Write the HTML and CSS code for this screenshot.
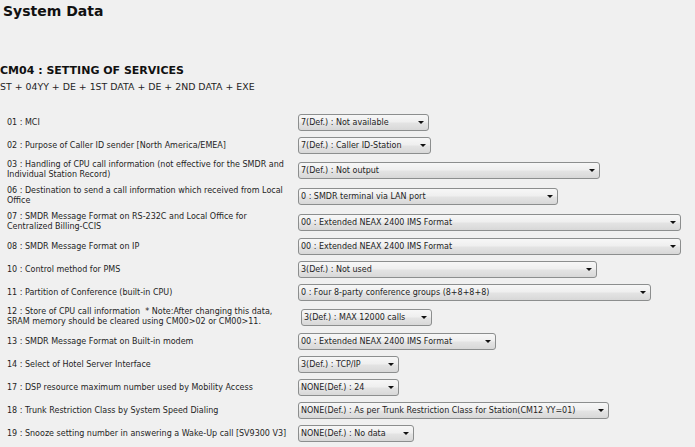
FILE: index.html
```html
<!DOCTYPE html>
<html lang="en">
<head>
<meta charset="utf-8">
<title>System Data</title>
<link rel="stylesheet" href="styles.css">
</head>
<body>
<h1 class="title">System Data</h1>
<h2 class="cm-title">CM04 : SETTING OF SERVICES</h2>
<p class="cm-cmd">ST + 04YY + DE + 1ST DATA + DE + 2ND DATA + EXE</p>
<table class="settings">
  <tr>
    <td class="label">01 : MCI</td>
    <td class="field"><span class="combo w131"><select><option>7(Def.) : Not available</option></select></span></td>
  </tr>
  <tr>
    <td class="label">02 : Purpose of Caller ID sender [North America/EMEA]</td>
    <td class="field"><span class="combo w133"><select><option>7(Def.) : Caller ID-Station</option></select></span></td>
  </tr>
  <tr>
    <td class="label">03 : Handling of CPU call information (not effective for the SMDR and<br>Individual Station Record)</td>
    <td class="field"><span class="combo w302"><select><option>7(Def.) : Not output</option></select></span></td>
  </tr>
  <tr>
    <td class="label">06 : Destination to send a call information which received from Local<br>Office</td>
    <td class="field"><span class="combo w260"><select><option>0 : SMDR terminal via LAN port</option></select></span></td>
  </tr>
  <tr>
    <td class="label">07 : SMDR Message Format on RS-232C and Local Office for<br>Centralized Billing-CCIS</td>
    <td class="field"><span class="combo w383"><select><option>00 : Extended NEAX 2400 IMS Format</option></select></span></td>
  </tr>
  <tr>
    <td class="label">08 : SMDR Message Format on IP</td>
    <td class="field"><span class="combo w383"><select><option>00 : Extended NEAX 2400 IMS Format</option></select></span></td>
  </tr>
  <tr>
    <td class="label">10 : Control method for PMS</td>
    <td class="field"><span class="combo w299"><select><option>3(Def.) : Not used</option></select></span></td>
  </tr>
  <tr>
    <td class="label">11 : Partition of Conference (built-in CPU)</td>
    <td class="field"><span class="combo w353"><select><option>0 : Four 8-party conference groups (8+8+8+8)</option></select></span></td>
  </tr>
  <tr>
    <td class="label">12 : Store of CPU call information &nbsp;* Note:After changing this data,<br>SRAM memory should be cleared using CM00&gt;02 or CM00&gt;11.</td>
    <td class="field"><span class="combo w131 indent"><select><option>3(Def.) : MAX 12000 calls</option></select></span></td>
  </tr>
  <tr>
    <td class="label">13 : SMDR Message Format on Built-in modem</td>
    <td class="field"><span class="combo w198"><select><option>00 : Extended NEAX 2400 IMS Format</option></select></span></td>
  </tr>
  <tr>
    <td class="label">14 : Select of Hotel Server Interface</td>
    <td class="field"><span class="combo w101"><select><option>3(Def.) : TCP/IP</option></select></span></td>
  </tr>
  <tr>
    <td class="label">17 : DSP resource maximum number used by Mobility Access</td>
    <td class="field"><span class="combo w101"><select><option>NONE(Def.) : 24</option></select></span></td>
  </tr>
  <tr>
    <td class="label">18 : Trunk Restriction Class by System Speed Dialing</td>
    <td class="field"><span class="combo w311"><select><option>NONE(Def.) : As per Trunk Restriction Class for Station(CM12 YY=01)</option></select></span></td>
  </tr>
  <tr>
    <td class="label">19 : Snooze setting number in answering a Wake-Up call [SV9300 V3]</td>
    <td class="field"><span class="combo w116"><select><option>NONE(Def.) : No data</option></select></span></td>
  </tr>
</table>
</body>
</html>
```

FILE: styles.css
```css
html, body {
  margin: 0;
  padding: 0;
  background: #f0f0f0;
}

body {
  font-family: "DejaVu Sans", Verdana, sans-serif;
  color: #1e1e1e;
}

.title {
  margin: 0;
  padding: 3px 0 0 3px;
  font-size: 14px;
  line-height: 16px;
  font-weight: bold;
  color: #111;
}

.cm-title {
  margin: 45px 0 0;
  font-size: 11px;
  line-height: 13px;
  font-weight: bold;
  color: #111;
}

.cm-cmd {
  margin: 4px 0 0;
  font-size: 9.4px;
  line-height: 12px;
}

.settings {
  margin: 18px 0 0 7px;
  border-collapse: collapse;
}

.settings td {
  padding: 3px 0;
  vertical-align: middle;
}

.label {
  width: 291px;
  font-size: 8px;
  line-height: 10px;
  white-space: nowrap;
}

.combo {
  position: relative;
  display: block;
  height: 17px;
}

.combo.indent {
  margin-left: 3px;
}

.combo select {
  -webkit-appearance: none;
  appearance: none;
  display: block;
  box-sizing: border-box;
  width: 100%;
  height: 17px;
  margin: 0;
  padding: 0 16px 0 2px;
  border: 1px solid #8c8e8e;
  border-radius: 3px;
  background: linear-gradient(to bottom, #f7f7f7 0%, #efefef 45%, #e3e3e3 55%, #d8d8d8 100%);
  font-family: "DejaVu Sans", Verdana, sans-serif;
  font-size: 8px;
  line-height: 15px;
  color: #1e1e1e;
  outline: none;
}

.combo::after {
  content: "";
  position: absolute;
  right: 5px;
  top: 7px;
  width: 0;
  height: 0;
  border-left: 3px solid transparent;
  border-right: 3px solid transparent;
  border-top: 3px solid #111;
  pointer-events: none;
}

.w101 { width: 101px; }
.w116 { width: 116px; }
.w131 { width: 131px; }
.w133 { width: 133px; }
.w198 { width: 198px; }
.w260 { width: 260px; }
.w299 { width: 299px; }
.w302 { width: 302px; }
.w311 { width: 311px; }
.w353 { width: 353px; }
.w383 { width: 383px; }
```
